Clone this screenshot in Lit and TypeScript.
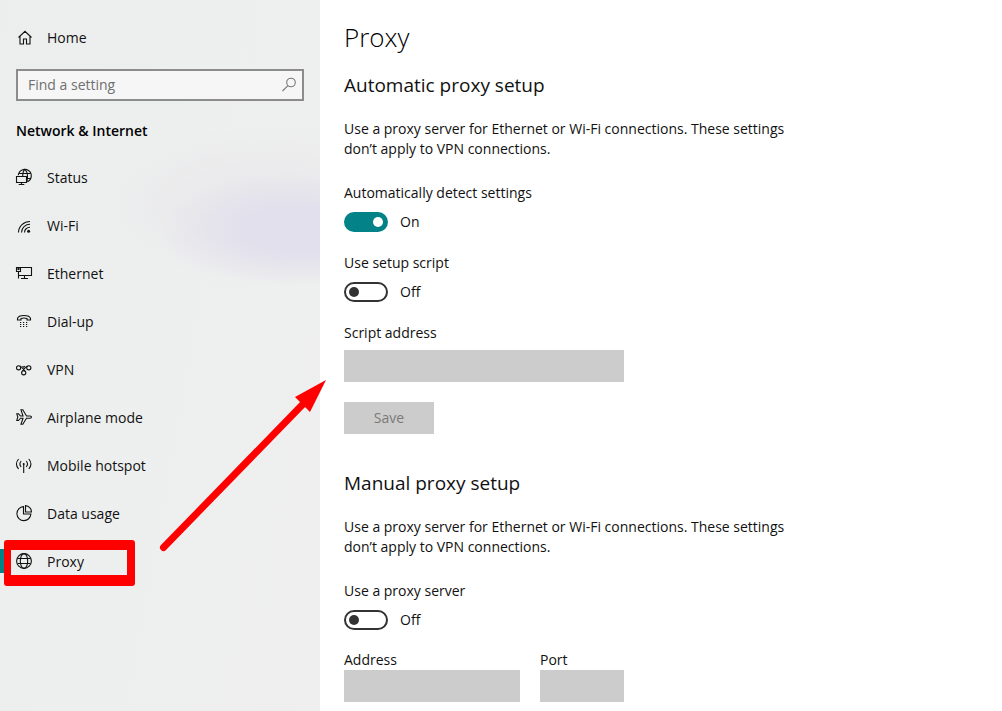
import { LitElement, html, css, svg, type TemplateResult } from "lit";
import { customElement, property, state } from "lit/decorators.js";

const icons: Record<string, TemplateResult> = {
  home: svg`<path d="M2.500 8.500 9 2.300l6.500 6.200M4 7.200V15h3.500v-5h3v5H14V7.200" />`,
  search: svg`<circle cx="10" cy="6.500" r="4.300" /><path d="M6.900 9.600 1.500 15" />`,
  status: svg`<path d="M2.300 6.200A6.500 6.500 0 1 1 11.500 12.700M2.600 4.500h11.600M11 9.500h4M6.700 7.500C6.700 4 7.500 1.500 8.700.5c1.500 1 2.800 3.500 2.800 7 0 2-.2 3.500-.6 5" /><path d="M.5 7.500h10v6H.5zM2.700 15.500h5.600M5.500 13.500v2" />`,
  wifi: svg`<path d="M2.500 15.500C2.500 9 8 4.500 14 4.500M5.500 15.500c0-4.800 4-8.200 8.500-8.200M8.500 15.500c0-3 2.500-5.200 5.500-5.200" /><circle class="solid" cx="12.600" cy="14.300" r="1.500" />`,
  ethernet: svg`<path d="M4.500 2.500h11v8h-13v-4M8.500 10.500v3M5 13.500h7M.5 2.500h4v4h-4zM2.500 6.500v7" /><path d="M2 3.500h1v1H2z" />`,
  dialup: svg`<path d="M1.500 7V5.500C2 3.500 5 2.500 8 2.500s6 1 6.500 3V7h-3.500V5.500C9 4.900 7 4.900 5 5.500V7z" /><path class="dots" d="M4 9.500h7.200M4 11.500h7.200M4 13.500h7.200" />`,
  vpn: svg`<circle cx="2.600" cy="6.800" r="2.100" /><circle cx="12.800" cy="6.800" r="2.100" /><circle cx="7.700" cy="11.800" r="2.100" /><path d="M3.800 5c1.500 0 2.700 2.500 5.200 5M11.600 5c-1.500 0-2.700 2.500-5.200 5M6.500 5 7.700 6.300 8.900 5" />`,
  airplane: svg`<path d="M.8 4.800h1.700l2 2.200H7L5 .8h1.800L10.500 7H14c2 0 2 2.200 0 2.200h-3.500L6.800 15.300H5L7 9.200H4.500l-2 2.300H.8L1.800 8z" />`,
  hotspot: svg`<circle class="solid" cx="7.700" cy="7" r="1" /><path d="M7.700 7v9M5.200 4c-1.500 1.700-1.500 4.300 0 6M10.200 4c1.500 1.700 1.500 4.300 0 6M2.600 2c-2.600 3-2.600 7 0 10M12.800 2c2.600 3 2.600 7 0 10" />`,
  data: svg`<path d="M7.500 1.600a7 7 0 1 0 7.400 7.400H7.500z" /><path d="M9.500.6a6.600 6.600 0 0 1 6 6.400h-6z" />`,
  proxy: svg`<circle cx="8" cy="8" r="7.400" /><path d="M1.500 5.500h13M1.500 10.500h13" /><ellipse cx="8" cy="8" rx="3.700" ry="7.400" />`,
};

@customElement("line-icon")
class LineIcon extends LitElement {
  @property() name = "";

  static styles = css`
    :host { display: block; flex: none; width: 16px; height: 16px; padding-bottom: 2px; }
    .glyph { display: block; width: 16px; height: 16px; overflow: visible; fill: none; stroke: currentColor; stroke-width: 1.1; }
    .solid { fill: currentColor; stroke: none; }
    .dots { stroke-dasharray: 1.2 1.8; }
  `;

  render() {
    return html`<svg class="glyph" viewBox="0 0 16 16" aria-hidden="true">${icons[this.name]}</svg>`;
  }
}

@customElement("toggle-row")
class ToggleRow extends LitElement {
  @property() label = "";
  @property({ type: Boolean }) on = false;

  static styles = css`
    :host { display: block; }
    .label { display: block; margin-bottom: 9px; }
    .row { display: flex; align-items: center; gap: 12px; }
    .switch {
      appearance: none; box-sizing: border-box; margin: 0; width: 44px; height: 20px; padding: 0 3px;
      display: flex; align-items: center; border: 2px solid #333; border-radius: 10px; background: #fff;
    }
    .switch::before { content: ""; width: 10px; height: 10px; border-radius: 50%; background: #333; }
    .switch:checked { justify-content: flex-end; background: #038387; border-color: #038387; }
    .switch:checked::before { background: #fff; }
  `;

  private flip(e: Event) {
    this.on = (e.target as HTMLInputElement).checked;
  }

  render() {
    return html`
      <label class="label" for="switch">${this.label}</label>
      <div class="row">
        <input class="switch" id="switch" type="checkbox" role="switch" .checked=${this.on} @change=${this.flip} />
        <span>${this.on ? "On" : "Off"}</span>
      </div>
    `;
  }
}

const pages = [
  ["status", "Status"],
  ["wifi", "Wi-Fi"],
  ["ethernet", "Ethernet"],
  ["dialup", "Dial-up"],
  ["vpn", "VPN"],
  ["airplane", "Airplane mode"],
  ["hotspot", "Mobile hotspot"],
  ["data", "Data usage"],
  ["proxy", "Proxy"],
];

@customElement("app-root")
class AppRoot extends LitElement {
  @state() private current = "proxy";

  static styles = css`
    :host {
      display: flex; position: relative; min-height: 100vh; background: #fff; color: #111;
      font: 14px/20px "Open Sans", "Noto Sans", sans-serif;
    }
    .side {
      flex: none; box-sizing: border-box; width: 320px; padding-top: 14px;
      background:
        radial-gradient(ellipse 140px 56px at 300px 230px, #e2e0ec 0%, #e2e0ec 40%, #e2e0ec00 100%),
        radial-gradient(ellipse 170px 80px at 260px 205px, #e8e7ea 0%, #e8e7ea00 100%),
        linear-gradient(100deg, #eceeee, #efefef);
    }
    .link {
      display: flex; align-items: center; gap: 15px; height: 48px; padding: 0 16px;
      color: inherit; text-decoration: none;
    }
    .search {
      display: flex; align-items: center; box-sizing: border-box; height: 32px; margin: 7px 16px 20px;
      padding: 0 5px 0 10px; border: 2px solid #8c8c8c; background: #f6f6f6; color: #777;
    }
    .find { flex: 1; min-width: 0; padding: 0; border: 0; outline: 0; background: none; font: inherit; color: #111; }
    .find::placeholder { color: #707070; opacity: 1; }
    .group { margin: 0 16px 13px; font-size: 14px; line-height: 20px; font-weight: 600; color: #000; }
    .selected { position: relative; }
    .selected::before { content: ""; position: absolute; left: 0; top: 11px; width: 4px; height: 24px; background: #038387; }
    .frame {
      position: absolute; left: 4px; top: 2px; box-sizing: border-box; width: 131px; height: 46px;
      border: solid #f00; border-width: 10px 8px 11px 7px; border-radius: 3px; pointer-events: none;
    }
    .main { flex: 1; min-width: 0; padding: 19px 24px 0; }
    .title { margin: 0 0 17px; font-size: 26px; line-height: 36px; font-weight: 300; color: #000; }
    .heading { margin: 0 0 21px; font-size: 19px; line-height: 26px; font-weight: 400; }
    .text { margin: 0 0 24px; max-width: 460px; }
    .toggle { margin-bottom: 21px; }
    .label { display: block; }
    .box {
      display: block; box-sizing: border-box; width: 100%; height: 32px; padding: 0 8px; border: 0;
      background: #ccc; font: inherit;
    }
    .script { max-width: 280px; }
    .script .label { margin-bottom: 7px; }
    .save {
      display: block; width: 90px; height: 32px; margin: 20px 0 36px; padding: 0; border: 0;
      background: #ccc; color: #7a7a7a; font: inherit;
    }
    .pair { display: grid; grid-template-columns: 176px 84px; gap: 20px; margin-top: -1px; }
    .arrow { position: absolute; left: 150px; top: 370px; width: 190px; height: 190px; pointer-events: none; }
    .shaft { stroke: #f00; stroke-width: 7; stroke-linecap: round; }
    .tip { fill: #f00; }
  `;

  private open(e: Event, id: string) {
    e.preventDefault();
    this.current = id;
  }

  private page([id, label]: string[]) {
    const on = id === this.current;
    return html`
      <a class="link ${on ? "selected" : ""}" href="#${id}" aria-current=${on ? "page" : "false"}
        @click=${(e: Event) => this.open(e, id)}>
        <line-icon name=${id}></line-icon><span>${label}</span>
        ${on ? html`<span class="frame"></span>` : ""}
      </a>
    `;
  }

  render() {
    const intro = "Use a proxy server for Ethernet or Wi-Fi connections. These settings don’t apply to VPN connections.";
    return html`
      <nav class="side">
        <a class="link" href="#home"><line-icon name="home"></line-icon><span>Home</span></a>
        <div class="search">
          <input class="find" type="search" placeholder="Find a setting" aria-label="Find a setting" />
          <line-icon name="search"></line-icon>
        </div>
        <h2 class="group">Network &amp; Internet</h2>
        ${pages.map((p) => this.page(p))}
      </nav>
      <main class="main">
        <h1 class="title">Proxy</h1>
        <h2 class="heading">Automatic proxy setup</h2>
        <p class="text">${intro}</p>
        <toggle-row class="toggle" label="Automatically detect settings" on></toggle-row>
        <toggle-row class="toggle" label="Use setup script"></toggle-row>
        <div class="script">
          <label class="label" for="script">Script address</label>
          <input class="box" id="script" disabled />
        </div>
        <button class="save" disabled>Save</button>
        <h2 class="heading">Manual proxy setup</h2>
        <p class="text">${intro}</p>
        <toggle-row class="toggle" label="Use a proxy server"></toggle-row>
        <div class="pair">
          <div><label class="label" for="address">Address</label><input class="box" id="address" disabled /></div>
          <div><label class="label" for="port">Port</label><input class="box" id="port" disabled /></div>
        </div>
      </main>
      <svg class="arrow" viewBox="0 0 190 190" aria-hidden="true">
        <path class="shaft" d="M13.500 177.500 155 32" />
        <path class="tip" d="M176 10 145 27l15 15z" />
      </svg>
    `;
  }
}
